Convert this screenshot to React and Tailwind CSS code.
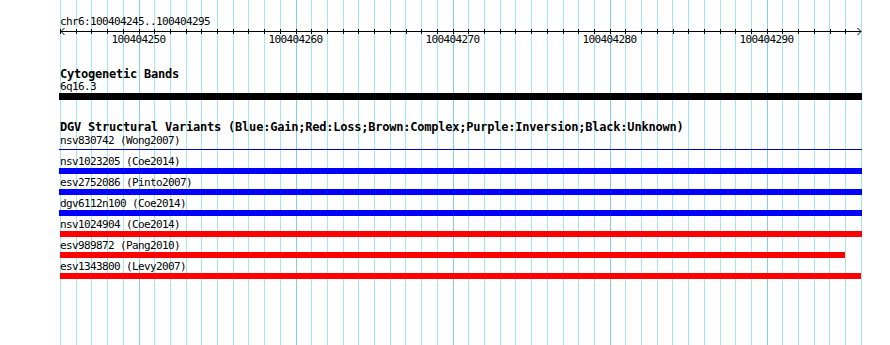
import React from 'react';

// one base pair in pixels (51 bp across 801 px)
const BP = 801 / 51;

const gridLines = Array.from({ length: 52 }, (_, i) => i);
const ticks = Array.from({ length: 51 }, (_, i) => Math.round(i * BP) + 0.5);
const rulerLabels = ['100404250', '100404260', '100404270', '100404280', '100404290'];

const variants = [
  { label: 'nsv1023205 (Coe2014)', bar: 'h-[6px] bg-[#0000ff] w-[803px] -ml-px' },
  { label: 'esv2752086 (Pinto2007)', bar: 'h-[6px] bg-[#0000ff] w-[803px] -ml-px' },
  { label: 'dgv6112n100 (Coe2014)', bar: 'h-[6px] bg-[#0000ff] w-[803px] -ml-px' },
  { label: 'nsv1024904 (Coe2014)', bar: 'h-[6px] bg-[#ff0000] w-[802px]' },
  { label: 'esv989872 (Pang2010)', bar: 'h-[6px] bg-[#ff0000] w-[785px]' },
  { label: 'esv1343800 (Levy2007)', bar: 'h-[6px] bg-[#ff0000] w-[801px]' },
];

const small = "font-['DejaVu_Sans_Mono',monospace] text-[11px] leading-[12px] tracking-[-0.62px] text-black whitespace-nowrap";
const bold = "font-['DejaVu_Sans_Mono',monospace] font-bold text-[12px] leading-[12px] tracking-[-0.22px] text-black whitespace-nowrap";

const Ruler = () => (
  <svg width="802" height="6" className="block overflow-visible" shapeRendering="crispEdges">
    <line x1="0" y1="3.5" x2="801" y2="3.5" stroke="#000" />
    {ticks.map((x) => (
      <line key={x} x1={x} y1="1" x2={x} y2="6" stroke="#000" />
    ))}
    <polyline points="4.5,0 1,3.5 4.5,7" fill="none" stroke="#000" shapeRendering="auto" />
    <polyline points="797.5,0 801,3.5 797.5,7" fill="none" stroke="#000" shapeRendering="auto" />
  </svg>
);

export default function App() {
  return (
    <div className="relative w-[890px] h-[345px] bg-white overflow-hidden">
      {/* grid behind the tracks */}
      <div className="absolute top-0 bottom-0 left-[60px] w-[802px] flex justify-between">
        {gridLines.map((i) => (
          <div
            key={i}
            className={i % 10 === 5 ? 'w-px h-full bg-[#86c9f2]' : 'w-px h-full bg-[#a3e6ee]'}
          />
        ))}
      </div>

      <div className="relative pl-[60px] pt-[16px] flex flex-col">
        <div className={small}>chr6:100404245..100404295</div>
        <Ruler />
        <div className="flex">
          {rulerLabels.map((l) => (
            <div key={l} className={`w-[157px] text-center ${small}`}>
              {l}
            </div>
          ))}
        </div>

        <div className={`mt-[22px] ${bold}`}>Cytogenetic Bands</div>
        <div className={`mt-px ${small}`}>6q16.3</div>
        <div className="h-[7px] w-[803px] -ml-px bg-black" />

        <div className={`mt-[21px] ${bold}`}>
          DGV Structural Variants (Blue:Gain;Red:Loss;Brown:Complex;Purple:Inversion;Black:Unknown)
        </div>
        <div className={`mt-[2px] ${small}`}>nsv830742 (Wong2007)</div>
        <div className="h-[6px]">
          <div className="mt-[2px] h-px w-[803px] -ml-px bg-[#0000c8]" />
        </div>

        {variants.map((v) => (
          <div key={v.label} className="pt-[3px] flex flex-col">
            <div className={small}>{v.label}</div>
            <div className={v.bar} />
          </div>
        ))}
      </div>
    </div>
  );
}
